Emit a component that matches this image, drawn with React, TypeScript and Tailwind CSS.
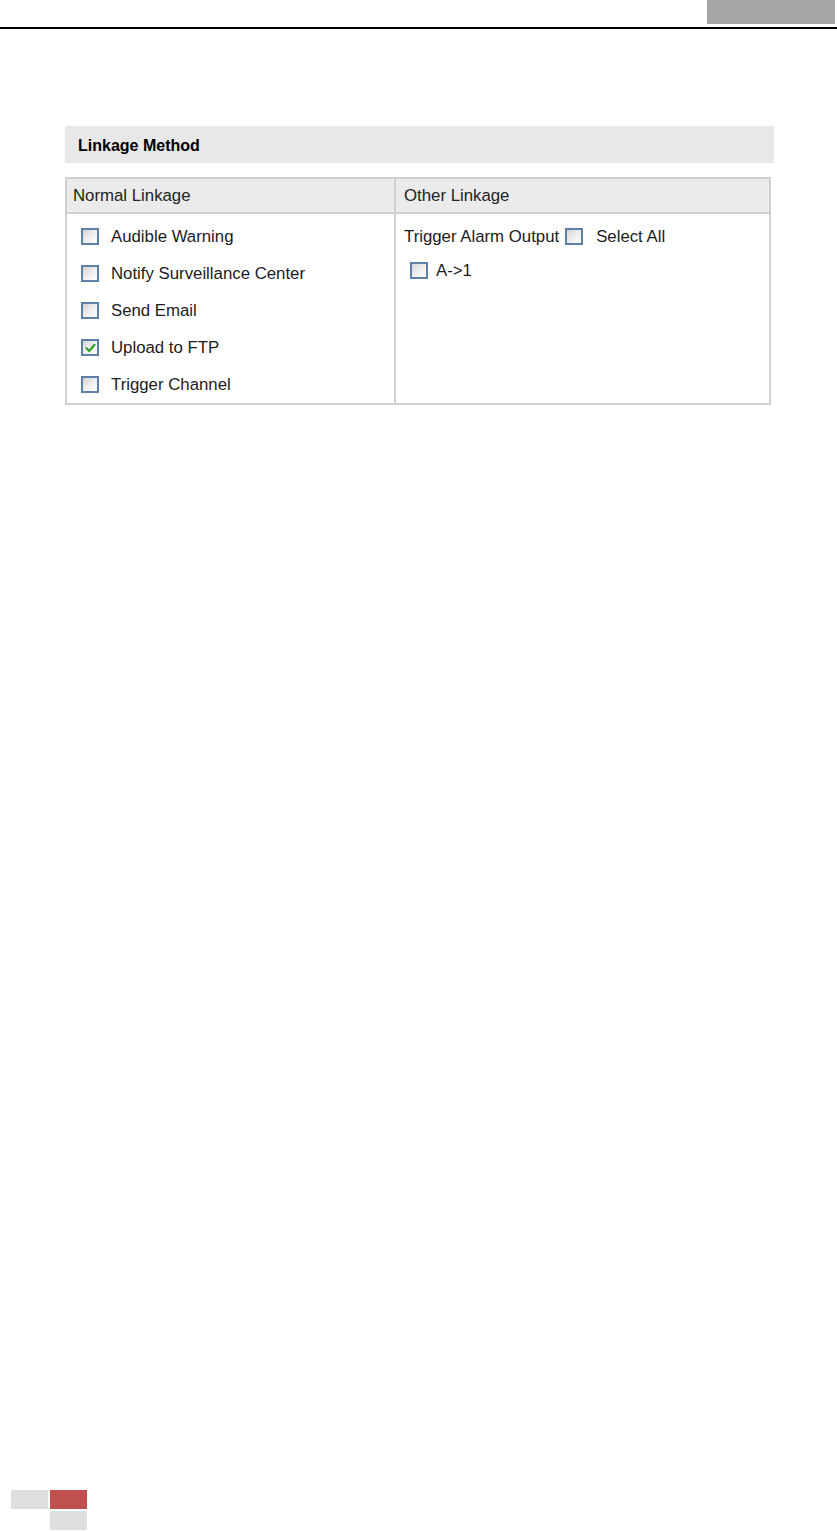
const Checkbox = ({ checked = false }: { checked?: boolean }) => (
  <span className="flex h-[17px] w-[18px] shrink-0 items-center justify-center border-2 border-[#5d80a8] bg-gradient-to-br from-[#d4d4d4] via-[#eeeeee] to-white">
    {checked && (
      <svg width="11" height="10" viewBox="0 0 11 10">
        <path d="M1.5 5.2 L4.2 8 L9.5 1.8" fill="none" stroke="#2ea42e" strokeWidth="2.2" strokeLinecap="round" strokeLinejoin="round" />
      </svg>
    )}
  </span>
);

export default function App() {
  const normal = [
    { label: "Audible Warning", checked: false },
    { label: "Notify Surveillance Center", checked: false },
    { label: "Send Email", checked: false },
    { label: "Upload to FTP", checked: true },
    { label: "Trigger Channel", checked: false },
  ];

  return (
    <div className="flex min-h-[1532px] flex-col bg-white font-['Liberation_Sans',Arial,sans-serif] text-[#1c1c1c]">
      {/* page header */}
      <div className="flex justify-end pr-[2px]">
        <div className="h-6 w-[128px] bg-[#a6a6a6]" />
      </div>
      <div className="mt-[3px] h-[2px] bg-black" />

      <div className="ml-[65px] mt-[97px] w-[709px]">
        <div className="flex h-[37px] items-center bg-[#e8e8e8] pl-[13px] pt-[3px] text-[16px] font-bold text-black">
          Linkage Method
        </div>

        <div className="mt-[14px] w-[706px] border-2 border-[#d0d0d0] text-[16.8px]">
          <div className="grid h-[35px] grid-cols-[329px_1fr] bg-[#ebebeb] border-b-2 border-[#d0d0d0]">
            <div className="flex items-center border-r-2 border-[#d0d0d0] pl-[6px] text-[#222]">Normal Linkage</div>
            <div className="flex items-center pl-[8px] text-[#222]">Other Linkage</div>
          </div>
          <div className="grid grid-cols-[329px_1fr]">
            <div className="flex flex-col border-r-2 border-[#d0d0d0] pl-[14px] pt-[4px]">
              {normal.map((item) => (
                <div key={item.label} className="flex h-[37px] items-center gap-[12px]">
                  <Checkbox checked={item.checked} />
                  <span>{item.label}</span>
                </div>
              ))}
            </div>
            <div className="flex flex-col pl-[8px] pt-[4px]">
              <div className="flex h-[37px] items-center">
                <span>Trigger Alarm Output</span>
                <span className="ml-[6px]"><Checkbox /></span>
                <span className="ml-[13px]">Select All</span>
              </div>
              <div className="mt-[3px] flex items-center gap-[8px] pl-[6px]">
                <Checkbox />
                <span>A-&gt;1</span>
              </div>
            </div>
          </div>
        </div>
      </div>

      {/* page footer */}
      <div className="mt-auto grid w-fit grid-cols-[37px_37px] gap-[2px] pb-[2px] pl-[11px]">
        <div className="h-[19px] bg-[#dedede]" />
        <div className="h-[19px] bg-[#c0504d]" />
        <div className="h-[19px]" />
        <div className="h-[19px] bg-[#dedede]" />
      </div>
    </div>
  );
}
